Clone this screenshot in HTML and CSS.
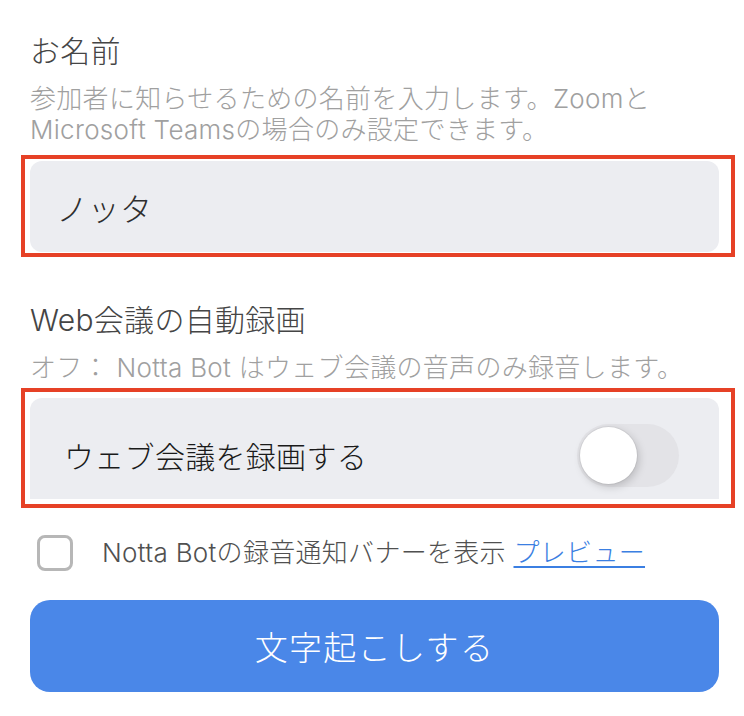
FILE: index.html
```html
<!DOCTYPE html>
<html lang="ja">
<head>
<meta charset="utf-8">
<title>Notta Bot 設定</title>
<link rel="stylesheet" href="styles.css">
</head>
<body>
<main class="page">
  <section class="field">
    <h2 class="field-title">お名前</h2>
    <p class="field-desc">参加者に知らせるための名前を入力します。ZoomとMicrosoft Teamsの場合のみ設定できます。</p>
    <div class="box input-box">
      <span class="input-value">ノッタ</span>
      <span class="highlight highlight-name"></span>
    </div>
  </section>

  <section class="field field-record">
    <h2 class="field-title">Web会議の自動録画</h2>
    <p class="field-desc">オフ：&nbsp;Notta Bot はウェブ会議の音声のみ録音します。</p>
    <div class="box toggle-box">
      <span class="toggle-label">ウェブ会議を録画する</span>
      <span class="switch"><span class="knob"></span></span>
      <span class="highlight highlight-record"></span>
    </div>
  </section>

  <label class="check-row">
    <span class="checkbox"></span>
    <span class="check-label">Notta Botの録音通知バナーを表示 <a class="preview-link" href="#">プレビュー</a></span>
  </label>

  <button class="submit" type="button">文字起こしする</button>
</main>
</body>
</html>
```
FILE: styles.css
```css
html, body {
  margin: 0;
  padding: 0;
  background: #ffffff;
}

.page {
  padding: 31px 25px 0 30px;
  font-family: "Inter", "Noto Sans CJK JP", sans-serif;
  font-weight: 300;
  letter-spacing: 0.3px;
}

.field-title {
  margin: 0;
  font-size: 30px;
  line-height: 40px;
  font-weight: 300;
  color: #454545;
}

.field-desc {
  margin: 12px 0 0;
  font-size: 26px;
  line-height: 31px;
  color: #a0a0a0;
}

.box {
  position: relative;
  background: #ecedf1;
}

.input-box {
  margin-top: 16px;
  height: 91px;
  border-radius: 12px;
  display: flex;
  align-items: center;
  padding-left: 26px;
}

.input-value {
  font-size: 32px;
  color: #2e2e2e;
}

.field-record {
  margin-top: 48px;
}

.toggle-box {
  margin-top: 15px;
  height: 101px;
  box-sizing: border-box;
  border-radius: 12px 12px 0 0;
  display: flex;
  align-items: center;
  justify-content: space-between;
  padding: 13px 40px 0 34px;
}

.toggle-label {
  font-size: 30px;
  color: #1a1a1a;
}

.switch {
  width: 102px;
  height: 63px;
  box-sizing: border-box;
  border-radius: 32px;
  background: #e3e3e7;
  display: flex;
  align-items: center;
  padding: 0 3px;
}

.knob {
  width: 57px;
  height: 57px;
  border-radius: 50%;
  background: #ffffff;
  box-shadow: 0 0 0 1px rgba(0, 0, 0, 0.05), 2px 3px 8px rgba(0, 0, 0, 0.18);
}

.highlight {
  position: absolute;
  border: 4px solid #e64126;
  pointer-events: none;
}

.highlight-name {
  left: -9px;
  right: -16px;
  top: -6px;
  bottom: -5px;
}

.highlight-record {
  left: -9px;
  right: -16px;
  top: -10px;
  bottom: -9px;
}

.check-row {
  margin-top: 36px;
  display: flex;
  align-items: center;
  padding-left: 7px;
}

.checkbox {
  width: 36px;
  height: 36px;
  box-sizing: border-box;
  border: 3px solid #b7b7b7;
  border-radius: 8px;
  flex: none;
}

.check-label {
  margin-left: 29px;
  font-size: 26px;
  line-height: 36px;
  color: #505050;
}

.preview-link {
  color: #3b7fe2;
  text-decoration: underline;
  text-underline-offset: 4px;
  text-decoration-thickness: 2px;
}

.submit {
  display: block;
  width: 100%;
  margin-top: 29px;
  height: 92px;
  border: none;
  border-radius: 20px;
  background: #4a87e8;
  color: #ffffff;
  font-family: "Inter", "Noto Sans CJK JP", sans-serif;
  font-weight: 300;
  font-size: 33px;
  letter-spacing: 1.3px;
  padding: 0;
}
```
